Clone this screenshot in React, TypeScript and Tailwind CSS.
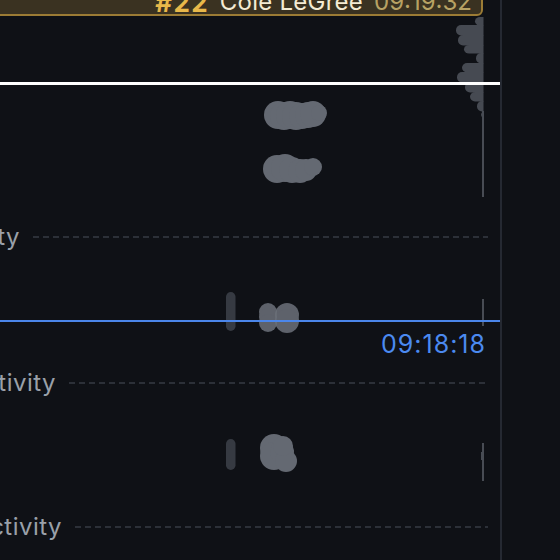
import React from "react";

const blobFill = "#6c717a";

type C = [number, number, number];

function Blob({ circles, opacity = 0.92 }: { circles: C[]; opacity?: number }) {
  return (
    <g opacity={opacity} fill={blobFill}>
      {circles.map(([cx, cy, r], i) => (
        <circle key={i} cx={cx} cy={cy} r={r} />
      ))}
    </g>
  );
}

function Chart() {
  const density: [number, number, number][] = [
    [17, 25, 475],
    [25, 35, 456],
    [35, 45, 458],
    [45, 53, 464],
    [53, 63, 476],
    [63, 72, 462],
    [72, 82, 457],
    [82, 92, 465],
    [92, 101, 470],
    [101, 111, 477],
    [111, 118, 481],
  ];
  const b1: C[] = [
    [278, 115, 14],
    [284, 116, 14],
    [290, 115, 14],
    [296, 116, 14],
    [302, 116, 13],
    [308, 115, 13],
    [313, 114, 13],
    [319, 113, 8],
  ];
  const b2: C[] = [
    [277, 169, 14],
    [285, 168, 14],
    [292, 170, 13],
    [300, 171, 12],
    [306, 170, 11],
    [313, 167, 9],
  ];
  const b3a: C[] = [
    [268, 312, 9],
    [268, 317, 9],
    [268, 323, 9],
  ];
  const b3b: C[] = [
    [287, 315, 12],
    [287, 321, 12],
  ];
  const b4: C[] = [
    [274, 448, 14],
    [274, 456, 14],
    [282, 452, 12],
    [286, 461, 11],
    [283, 446, 10],
  ];
  return (
    <svg
      className="absolute left-0 top-0"
      width={500}
      height={560}
      viewBox="0 0 500 560"
    >
      <defs>
        <clipPath id="dclip">
          <rect x={0} y={0} width={483.5} height={560} />
        </clipPath>
      </defs>
      <g clipPath="url(#dclip)" fill="#464a52">
        {density.map(([y1, y2, x], i) => (
          <rect key={i} x={x} y={y1} width={40} height={y2 - y1 + 0.5} rx={5} />
        ))}
      </g>
      <rect x={482} y={111} width={2} height={86} fill="#484c54" />
      <rect x={482} y={299} width={2} height={27} fill="#484c54" />
      <rect x={482} y={443} width={2} height={38} fill="#484c54" />
      <rect x={481} y={452} width={2} height={8} fill="#484c54" />
      <rect x={226} y={292} width={9.5} height={39} rx={4.75} fill="#363a42" />
      <rect x={226} y={439} width={9.5} height={31} rx={4.75} fill="#363a42" />
      <Blob circles={b1} />
      <Blob circles={b2} />
      <Blob circles={b3a} opacity={0.85} />
      <Blob circles={b3b} opacity={0.85} />
      <Blob circles={b4} />
    </svg>
  );
}

function Lane({ label, w }: { label: string; w: number }) {
  return (
    <div className="flex h-[20px] items-center">
      <div
        className="flex shrink-0 justify-end whitespace-nowrap text-[24px] leading-none tracking-[0.02em] text-[#9aa0a9]"
        style={{ width: w }}
      >
        {label}
      </div>
      <div
        className="ml-[13px] h-[2px] flex-1 bg-[repeating-linear-gradient(to_right,#2c3038_0_6px,transparent_6px_10px)]"
        style={{ marginRight: 12 }}
      />
    </div>
  );
}

export default function App() {
  return (
    <div
      className="relative flex h-[560px] w-[560px] overflow-hidden bg-[#0f1116]"
      style={{ fontFamily: "Inter, 'Noto Sans', sans-serif" }}
    >
      <div className="relative h-full w-[500px] shrink-0">
        <Chart />
        <div className="relative flex flex-col">
          <div className="h-[82px]" />
          <div className="h-[3px] bg-white" />
          <div className="h-[142px]" />
          <Lane label="Activity" w={20} />
          <div className="h-[73px]" />
          <div className="h-[2px] bg-[#4b86ea]" />
          <div className="h-[8px]" />
          <div className="flex h-[28px] items-center justify-end pr-[14px] text-[25px] leading-none tracking-[0.04em] text-[#4b8af0]">
            09:18:18
          </div>
          <div className="h-[15px]" />
          <Lane label="Activity" w={56} />
          <div className="h-[124px]" />
          <Lane label="Activity" w={62} />
        </div>
        <div className="absolute left-[-10px] top-[-22px] h-[38px] w-[493px] rounded-md border-2 border-[#9c7c35] bg-[#3a3221]">
          <div className="flex items-start justify-end gap-[11px] pr-[9px] pt-[10px] text-[24px] leading-none">
            <span className="text-[26px] font-bold tracking-[0.05em] text-[#e8b84a]">#22</span>
            <span className="tracking-[0.01em] text-[#f4ebd3]">Cole LeGree</span>
            <span className="text-[#b8a264]">09:19:32</span>
          </div>
        </div>
      </div>
      <div className="h-full w-[2px] shrink-0 bg-[#252932]" />
      <div className="h-full flex-1" />
    </div>
  );
}
